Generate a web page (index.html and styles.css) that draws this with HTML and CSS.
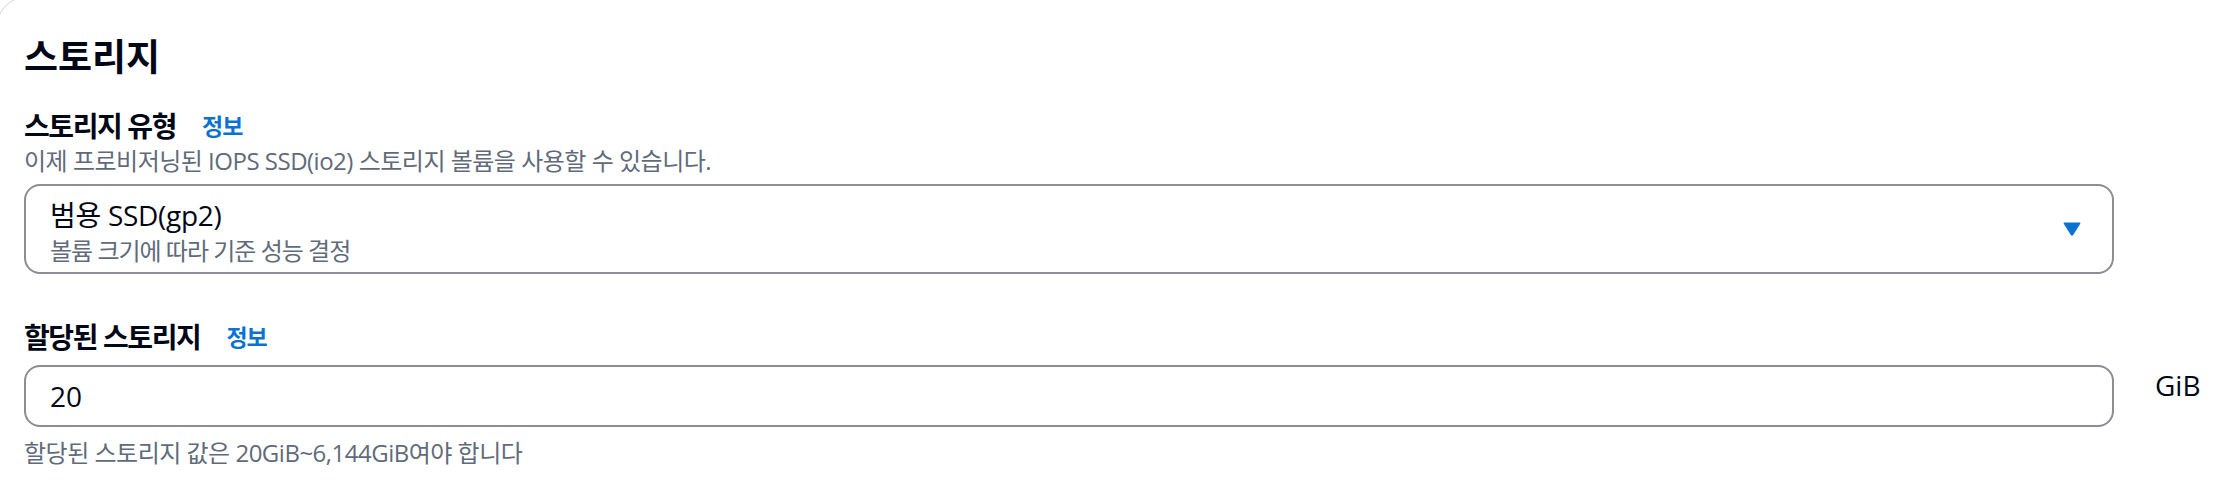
FILE: index.html
```html
<!DOCTYPE html>
<html lang="ko">
<head>
<meta charset="utf-8">
<title>스토리지</title>
<link rel="stylesheet" href="styles.css">
</head>
<body>
<section class="panel">
  <h2 class="panel-title">스토리지</h2>

  <div class="field field-type">
    <div class="field-label">
      <span class="label-text">스토리지 유형</span>
      <a class="info-link" href="#">정보</a>
    </div>
    <div class="field-desc">이제 프로비저닝된 IOPS SSD(io2) 스토리지 볼륨을 사용할 수 있습니다.</div>
    <div class="select">
      <div class="select-body">
        <div class="select-value">범용 SSD(gp2)</div>
        <div class="select-desc">볼륨 크기에 따라 기준 성능 결정</div>
      </div>
      <svg class="caret" width="20" height="16" viewBox="0 0 20 16" aria-hidden="true">
        <path d="M2.5 1.5 H17.5 Q19 1.5 18.2 2.8 L11.2 14 Q10 15.6 8.8 14 L1.8 2.8 Q1 1.5 2.5 1.5 Z" fill="#0972d3"/>
      </svg>
    </div>
  </div>

  <div class="field field-size">
    <div class="field-label">
      <span class="label-text">할당된 스토리지</span>
      <a class="info-link" href="#">정보</a>
    </div>
    <div class="input-row">
      <div class="input">20</div>
      <div class="unit">GiB</div>
    </div>
    <div class="field-hint">할당된 스토리지 값은 20GiB~6,144GiB여야 합니다</div>
  </div>
</section>
</body>
</html>
```

FILE: styles.css
```css
html, body {
  margin: 0;
  padding: 0;
  background: #ffffff;
  overflow: hidden;
}

body {
  width: 2240px;
  height: 482px;
  font-family: "Open Sans", "Noto Sans CJK KR", "Noto Sans", sans-serif;
  color: #000716;
}

.panel {
  margin: -4px 0 0 -4px;
  width: 2400px;
  height: 700px;
  box-sizing: border-box;
  border: 1px solid #d1d5db;
  border-radius: 32px;
  padding: 38px 0 0 27px;
  display: flex;
  flex-direction: column;
}

.panel-title {
  margin: 0;
  font-size: 37px;
  line-height: 44px;
  font-weight: 700;
  color: #000716;
}

.field {
  width: 2090px;
  display: flex;
  flex-direction: column;
}

.field-type {
  margin-top: 25px;
}

.field-size {
  margin-top: 41px;
  width: 2200px;
}

.field-label {
  display: flex;
  align-items: center;
  gap: 26px;
  height: 44px;
}

.label-text {
  font-size: 28px;
  font-weight: 700;
  line-height: 44px;
  letter-spacing: -1.4px;
}

.info-link {
  font-size: 23px;
  font-weight: 700;
  color: #0972d3;
  text-decoration: none;
  line-height: 44px;
  letter-spacing: -1px;
}

.field-desc,
.field-hint {
  font-size: 24px;
  line-height: 32px;
  color: #5f6b7a;
  letter-spacing: -0.5px;
}

.field-desc {
  margin-top: -3px;
}

.select {
  margin-top: 7px;
  height: 90px;
  box-sizing: border-box;
  border: 2px solid #8c8c94;
  border-radius: 16px;
  display: flex;
  align-items: center;
  padding: 0 30px 0 24px;
}

.select-body {
  flex: 1;
  display: flex;
  flex-direction: column;
  padding-top: 4px;
}

.select-value {
  font-size: 28px;
  line-height: 40px;
  letter-spacing: -0.3px;
}

.select-desc {
  font-size: 24px;
  line-height: 32px;
  color: #5f6b7a;
  letter-spacing: -1px;
}

.caret {
  display: block;
}

.input-row {
  margin-top: 6px;
  display: flex;
  align-items: flex-start;
  gap: 41px;
}

.input {
  width: 2090px;
  height: 62px;
  box-sizing: border-box;
  border: 2px solid #8c8c94;
  border-radius: 16px;
  padding: 0 24px;
  display: flex;
  align-items: center;
  font-size: 28px;
}

.unit {
  font-size: 28px;
  line-height: 40px;
}

.field-hint {
  margin-top: 10px;
}
```
